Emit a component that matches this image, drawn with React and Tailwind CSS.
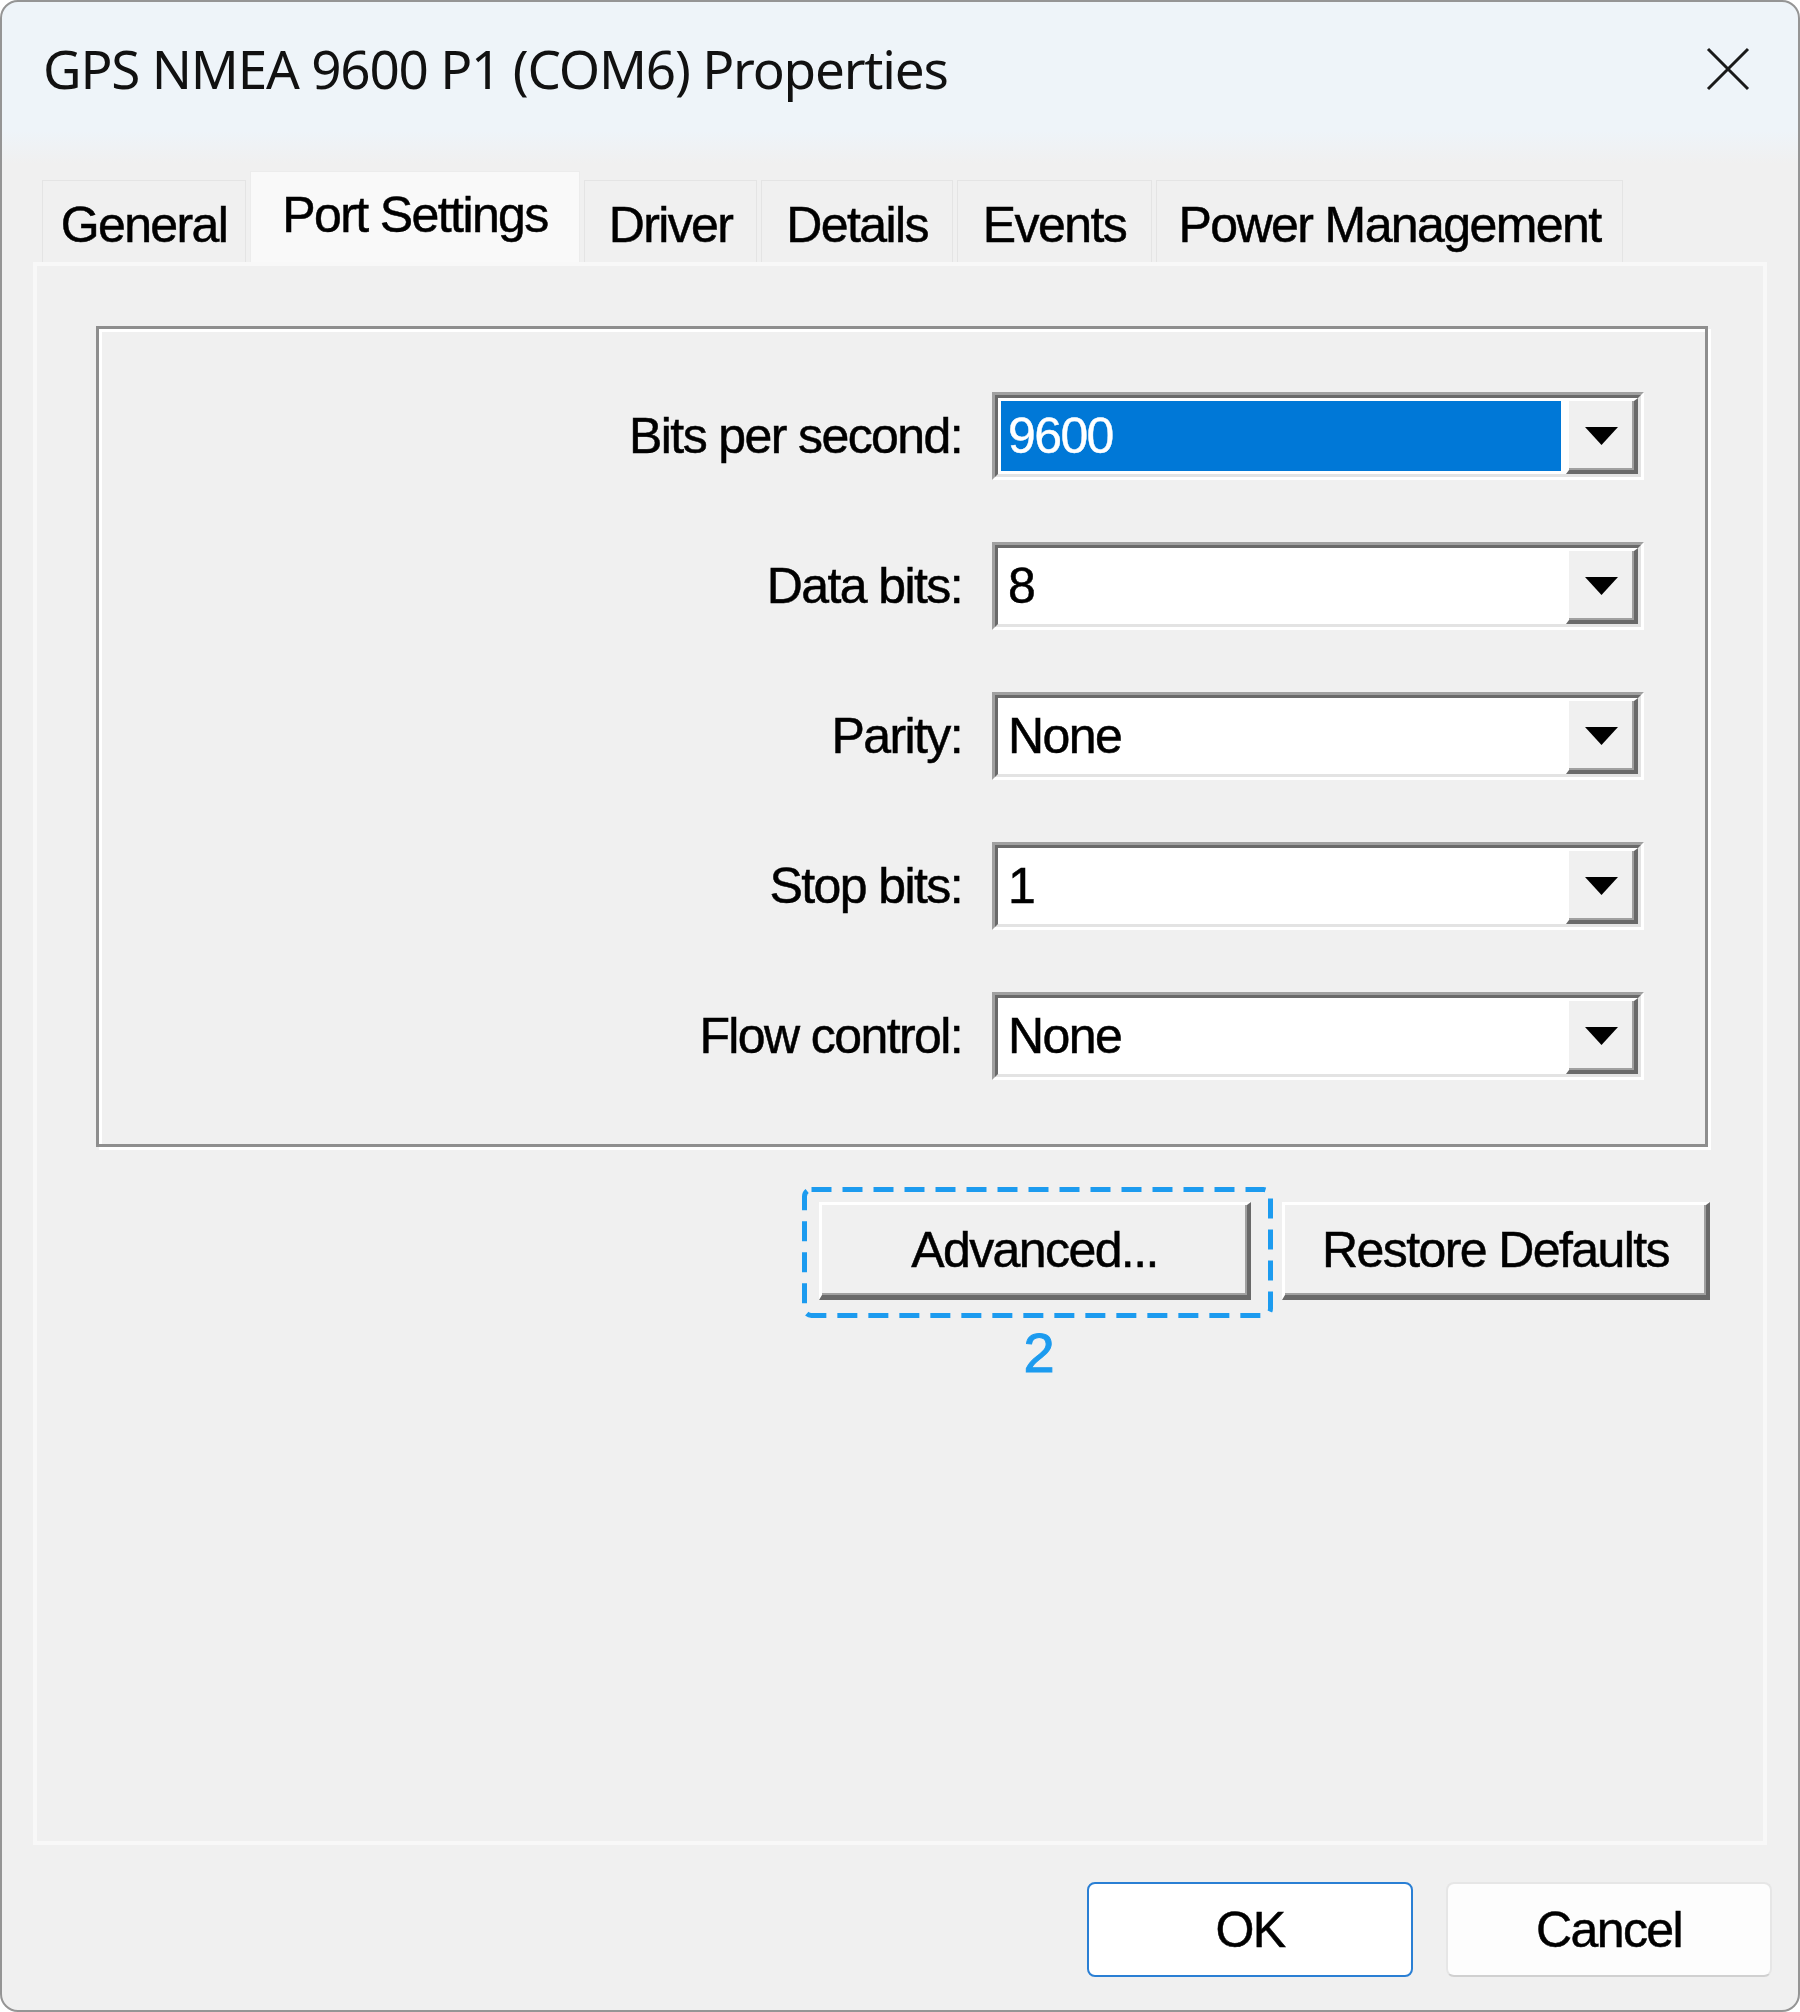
import React from "react";

const sans = "font-['Liberation_Sans',Arial,sans-serif]";

const tabs = [
  { name: "General", w: "w-[204px]" },
  { name: "Port Settings", w: "w-[330px]", active: true },
  { name: "Driver", w: "w-[173px]" },
  { name: "Details", w: "w-[192px]" },
  { name: "Events", w: "w-[195px]" },
  { name: "Power Management", w: "w-[467px]" },
];

const rows = [
  { label: "Bits per second:", value: "9600", selected: true },
  { label: "Data bits:", value: "8" },
  { label: "Parity:", value: "None" },
  { label: "Stop bits:", value: "1" },
  { label: "Flow control:", value: "None" },
];

const Arrow = () => (
  <svg width="33" height="18" viewBox="0 0 33 18">
    <polygon points="0,0 33,0 16.5,18" fill="#000" />
  </svg>
);

// sunken combo box, classic style
const Combo = ({ value, selected }) => (
  <div className="w-[652px] h-[88px] border-[3px] border-t-[#a0a0a0] border-l-[#a0a0a0] border-b-white border-r-white">
    <div className="h-full flex border-[3px] border-t-[#696969] border-l-[#696969] border-b-[#e3e3e3] border-r-[#e3e3e3] bg-white">
      <div className="flex-1 py-[3px] pl-[3px] pr-[5px]">
        <div
          className={
            selected
              ? "h-full flex items-center pl-[7px] bg-[#0078d7] text-white [-webkit-text-stroke:0.4px_#fff]"
              : "h-full flex items-center pl-[7px] text-black"
          }
        >
          {value}
        </div>
      </div>
      <div className="w-[72px] flex items-center justify-center bg-[#f0f0f0] border-t-[3px] border-l-[3px] border-b-[4px] border-r-[4px] border-t-white border-l-white border-b-[#696969] border-r-[#696969] shadow-[inset_-2px_-2px_0_#a0a0a0]">
        <Arrow />
      </div>
    </div>
  </div>
);

const RaisedButton = ({ children, w }) => (
  <div
    className={`${w} h-[98px] flex items-center justify-center bg-[#f0f0f0] border-t-[3px] border-l-[3px] border-b-[5px] border-r-[4px] border-t-white border-l-white border-b-[#696969] border-r-[#696969] shadow-[inset_-2px_-2px_0_#a0a0a0]`}
  >
    {children}
  </div>
);

export default function App() {
  return (
    <div className="w-[1800px] h-[2012px] bg-white">
      <div
        className={`w-full h-full flex flex-col rounded-[18px] border-2 border-[#959595] bg-[linear-gradient(180deg,#eef4f9_0px,#eef4f9_128px,#f0f0f0_162px)] text-[50px] tracking-[-1.6px] text-black leading-none [-webkit-text-stroke:0.5px_#000] ${sans}`}
      >
        {/* title bar */}
        <div className="h-[133px] flex justify-between pl-[41px] pr-[48px]">
          <div className="pt-[40px] font-['Noto_Sans',sans-serif] text-[53px] tracking-[-1.2px] text-[#111] [-webkit-text-stroke:0px]">
            GPS NMEA 9600 P1 (COM6) Properties
          </div>
          <div className="pt-[45px]">
            <svg width="44" height="44" viewBox="0 0 44 44">
              <path d="M2 2 L42 42 M42 2 L2 42" stroke="#1a1a1a" strokeWidth="3" />
            </svg>
          </div>
        </div>

        {/* tabs */}
        <div className="h-[127px] flex items-end gap-[4px] pl-[40px]">
          {tabs.map((t) =>
            t.active ? (
              <div
                key={t.name}
                className={`${t.w} h-[91px] pt-[18px] text-center bg-[#f9f9f9] border border-b-0 border-[#ececec]`}
              >
                {t.name}
              </div>
            ) : (
              <div
                key={t.name}
                className={`${t.w} h-[82px] pt-[19px] text-center bg-[#f0f0f0] border border-b-0 border-[#e4e4e4]`}
              >
                {t.name}
              </div>
            )
          )}
        </div>

        {/* tab page */}
        <div className="mx-[31px] h-[1583px] border-[4px] border-[#f8f8f8] bg-[#f0f0f0]">
          <div className="mt-[60px] ml-[59px] mr-[55px] h-[821px] border-[3px] border-[#8e8e8e] shadow-[inset_3px_3px_0_#fff,3px_3px_0_#fff] pt-[63px] pr-[61px] flex flex-col gap-[62px]">
            {rows.map((r) => (
              <div key={r.label} className="flex items-center justify-end gap-[30px]">
                <span>{r.label}</span>
                <Combo value={r.value} selected={r.selected} />
              </div>
            ))}
          </div>

          <div className="mt-[55px] pr-[53px] flex justify-end gap-[31px]">
            <div className="relative">
              <RaisedButton w="w-[432px]">Advanced...</RaisedButton>
              <svg
                className="absolute -left-[17px] -top-[15px]"
                width="471"
                height="131"
                viewBox="0 0 471 131"
              >
                <rect
                  x="2.5"
                  y="2.5"
                  width="466"
                  height="126"
                  rx="7"
                  fill="none"
                  stroke="#1c9bef"
                  strokeWidth="5"
                  strokeDasharray="20 11"
                />
              </svg>
              <div className="absolute left-[188px] top-[123px] w-[64px] text-center text-[56px] tracking-normal text-[#1c9bef] [-webkit-text-stroke:1px_#1c9bef]">
                2
              </div>
            </div>
            <RaisedButton w="w-[428px]">Restore Defaults</RaisedButton>
          </div>
        </div>

        {/* dialog buttons */}
        <div className="mt-[37px] pr-[26px] flex justify-end gap-[33px]">
          <div className="w-[326px] h-[95px] flex items-center justify-center rounded-[8px] bg-white border-2 border-[#2a7fd4]">
            OK
          </div>
          <div className="w-[326px] h-[95px] flex items-center justify-center rounded-[8px] bg-[#fdfdfd] border-2 border-[#e6e6e6] border-b-[#d0d0d0]">
            Cancel
          </div>
        </div>
      </div>
    </div>
  );
}
